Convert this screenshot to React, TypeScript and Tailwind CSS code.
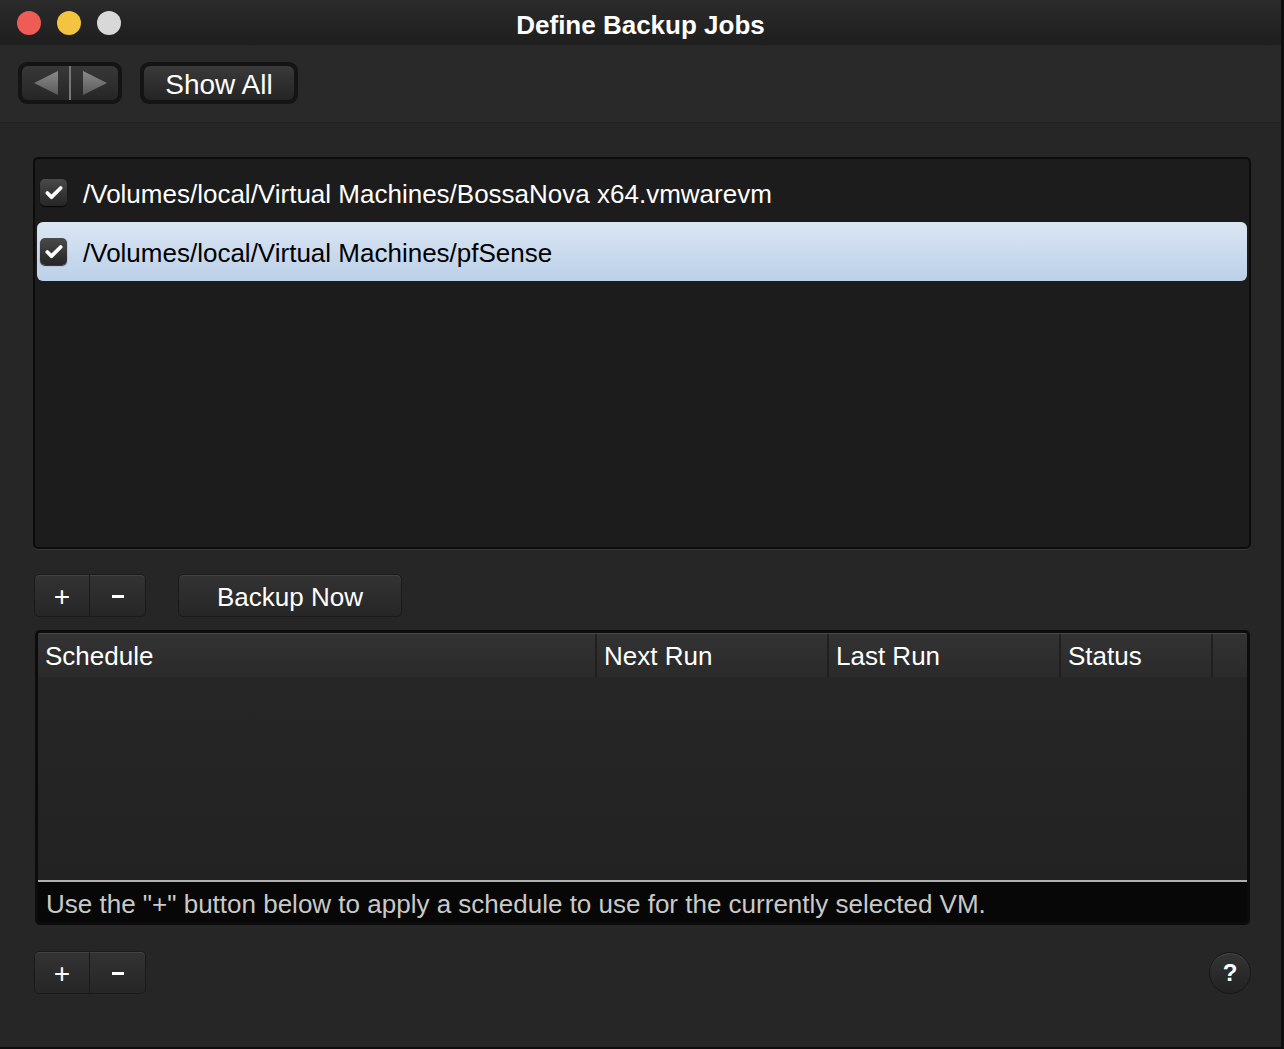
import { Check } from 'lucide-react'

const PATHS = [
  '/Volumes/local/Virtual Machines/BossaNova x64.vmwarevm',
  '/Volumes/local/Virtual Machines/pfSense',
]

const COLUMNS = [
  { label: 'Schedule', w: 'w-[559px]' },
  { label: 'Next Run', w: 'w-[232px]' },
  { label: 'Last Run', w: 'w-[232px]' },
  { label: 'Status', w: 'w-[152px]' },
]

function CheckBox() {
  return (
    <span className="flex items-center justify-center w-[27px] h-[27px] rounded-[5px] bg-gradient-to-b from-[#4a4a4a] to-[#262626] shadow-[0_1px_1px_rgba(0,0,0,0.8)]">
      <Check className="w-[20px] h-[20px] text-white" strokeWidth={4.5} />
    </span>
  )
}

function PlusMinus() {
  return (
    <div className="flex">
      <button className="w-[56px] h-[43px] rounded-l-[5px] bg-gradient-to-b from-[#333] to-[#262626] border border-[#1a1a1a] shadow-[inset_0_1px_0_rgba(255,255,255,0.08)] text-white text-[28px] leading-none flex items-center justify-center pt-[2px]">
        +
      </button>
      <button className="w-[56px] h-[43px] rounded-r-[5px] bg-gradient-to-b from-[#333] to-[#262626] border border-l-0 border-[#1a1a1a] shadow-[inset_0_1px_0_rgba(255,255,255,0.08)] flex items-center justify-center pt-[2px]">
        <span className="w-[12px] h-[3px] bg-white" />
      </button>
    </div>
  )
}

export default function App() {
  return (
    <div
      className="w-[1284px] h-[1049px] bg-[#262626] flex flex-col border-r-[3px] border-b-2 border-[#0e0e0e] overflow-hidden"
      style={{ fontFamily: '"Liberation Sans", Arial, sans-serif' }}
    >
      {/* Title bar */}
      <div className="relative h-[45px] shrink-0 bg-gradient-to-b from-[#2b2b2b] to-[#1e1e1e] flex items-center pl-[17px] gap-[16px]">
        <span className="w-[24px] h-[24px] rounded-full bg-[#ef5b55]" />
        <span className="w-[24px] h-[24px] rounded-full bg-[#f3c43f]" />
        <span className="w-[24px] h-[24px] rounded-full bg-[#d8d8d8]" />
        <span className="absolute inset-x-0 top-[3px] h-full flex items-center justify-center text-white font-bold text-[26px] pointer-events-none">
          Define Backup Jobs
        </span>
      </div>

      {/* Toolbar */}
      <div className="h-[78px] shrink-0 bg-[#292929] flex items-start pt-[17px] pl-[18px] gap-[18px] border-b border-[#202020]">
        <div className="w-[104px] h-[42px] rounded-[9px] bg-[#141414] p-[4px]">
          <div className="h-full rounded-[6px] bg-gradient-to-b from-[#383838] to-[#262626] flex items-center">
            <div className="flex-1 flex items-center justify-center">
              <svg width="26" height="26" viewBox="0 0 26 26">
                <defs>
                  <linearGradient id="arr" x1="0" y1="0" x2="0" y2="1">
                    <stop offset="0" stopColor="#8a8a8a" />
                    <stop offset="1" stopColor="#5a5a5a" />
                  </linearGradient>
                </defs>
                <path d="M25 1 L1 13 L25 25 Z" fill="url(#arr)" />
              </svg>
            </div>
            <span className="w-[2px] h-[34px] bg-[#777]" />
            <div className="flex-1 flex items-center justify-center">
              <svg width="26" height="26" viewBox="0 0 26 26">
                <path d="M1 1 L25 13 L1 25 Z" fill="url(#arr)" />
              </svg>
            </div>
          </div>
        </div>
        <div className="w-[158px] h-[42px] rounded-[9px] bg-[#141414] p-[4px]">
          <div className="h-full rounded-[6px] bg-gradient-to-b from-[#3a3a3a] to-[#242424] flex items-center justify-center text-white text-[28px] pt-[3px]">
            Show All
          </div>
        </div>
      </div>

      {/* Content */}
      <div className="flex-1 flex flex-col pl-[33px] pr-[30px] pt-[34px]">
        {/* VM list */}
        <div className="h-[392px] rounded-[5px] bg-[#1c1c1c] border-2 border-[#0c0c0c] shadow-[0_1px_0_rgba(255,255,255,0.08)] px-[2px] pt-[4px] flex flex-col">
          {PATHS.map((p, i) => (
            <div
              key={p}
              className={`h-[59px] flex items-center gap-[16px] pl-[3px] rounded-[6px] text-[26px] ${
                i === 1 ? 'bg-gradient-to-b from-[#dbe6f3] to-[#bbd0e8] text-black' : 'text-white'
              }`}
            >
              <CheckBox />
              <span className="pt-[3px]">{p}</span>
            </div>
          ))}
        </div>

        {/* Buttons */}
        <div className="mt-[25px] flex items-center gap-[32px] pl-[1px]">
          <PlusMinus />
          <button className="w-[224px] h-[43px] rounded-[5px] bg-gradient-to-b from-[#333] to-[#262626] border border-[#1a1a1a] shadow-[inset_0_1px_0_rgba(255,255,255,0.08)] text-white text-[26px] pt-[3px]">
            Backup Now
          </button>
        </div>

        {/* Schedule table */}
        <div className="mt-[13px] ml-[2px] mr-[1px] h-[295px] rounded-[5px] bg-[#232323] border-[3px] border-[#0c0c0c] flex flex-col overflow-hidden">
          <div className="h-[44px] shrink-0 flex bg-gradient-to-b from-[#333] to-[#2a2a2a] border-t border-[#4a4a4a]">
            {COLUMNS.map(c => (
              <div
                key={c.label}
                className={`${c.w} h-full flex items-center pl-[7px] pt-[2px] text-white text-[26px] border-r-2 border-[#202020]`}
              >
                {c.label}
              </div>
            ))}
            <div className="flex-1" />
          </div>
          <div className="flex-1 bg-gradient-to-b from-[#262626] to-[#222]" />
          <div className="h-[2px] bg-[#b0b0b0]" />
          <div className="h-[40px] bg-[#070707] flex items-center pl-[8px] pt-[4px] text-[#c9c9c9] text-[26px]">
            Use the "+" button below to apply a schedule to use for the currently selected VM.
          </div>
        </div>

        {/* Bottom bar */}
        <div className="mt-[26px] flex items-center justify-between pl-[1px]">
          <PlusMinus />
          <button className="w-[42px] h-[42px] rounded-full bg-gradient-to-b from-[#343434] to-[#222] border border-[#161616] shadow-[inset_0_1px_0_rgba(255,255,255,0.1)] text-white font-bold text-[24px] flex items-center justify-center">
            ?
          </button>
        </div>
      </div>
    </div>
  )
}
